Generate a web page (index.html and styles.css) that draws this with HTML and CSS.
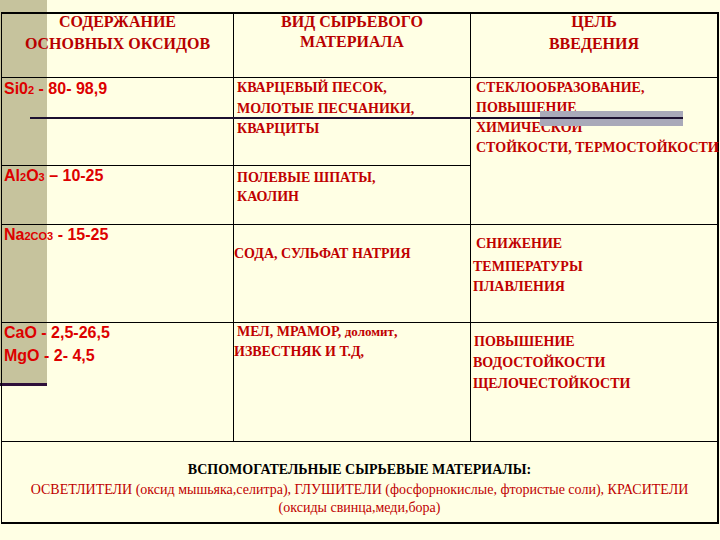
FILE: index.html
```html
<!DOCTYPE html>
<html lang="ru">
<head>
<meta charset="utf-8">
<title>Содержание основных оксидов</title>
<link rel="stylesheet" href="styles.css">
</head>
<body>
<div class="sheet">
  <div class="cell c1 head"><div class="hd h1"><div>СОДЕРЖАНИЕ</div><div>ОСНОВНЫХ ОКСИДОВ</div></div></div>
  <div class="cell c2 head"><div class="hd h2"><div>ВИД СЫРЬЕВОГО</div><div>МАТЕРИАЛА</div></div></div>
  <div class="cell c3 head"><div class="hd h3"><div>ЦЕЛЬ</div><div>ВВЕДЕНИЯ</div></div></div>

  <div class="cell c1 ox ox-si"><div>Si0<span class="sm">2</span> - 80- 98,9</div></div>
  <div class="cell c2 mat mat-si"><div>КВАРЦЕВЫЙ ПЕСОК,</div><div>МОЛОТЫЕ ПЕСЧАНИКИ,</div><div>КВАРЦИТЫ</div></div>
  <div class="cell c3 goal goal-si"><div>СТЕКЛООБРАЗОВАНИЕ,</div><div>ПОВЫШЕНИЕ</div><div>ХИМИЧЕСКОЙ</div><div>СТОЙКОСТИ, ТЕРМОСТОЙКОСТИ</div></div>

  <div class="cell c1 ox"><div>Al<span class="sm">2</span>O<span class="sm">3</span> – 10-25</div></div>
  <div class="cell c2 mat mat-al"><div>ПОЛЕВЫЕ ШПАТЫ,</div><div>КАОЛИН</div></div>

  <div class="cell c1 ox"><div>Na<span class="sm">2CO3</span> - 15-25</div></div>
  <div class="cell c2 mat mat-na"><div class="out">СОДА, СУЛЬФАТ НАТРИЯ</div></div>
  <div class="cell c3 goal goal-na"><div class="in">СНИЖЕНИЕ</div><div class="second">ТЕМПЕРАТУРЫ</div><div>ПЛАВЛЕНИЯ</div></div>

  <div class="cell c1 ox"><div>CaO - 2,5-26,5</div><div>MgO - 2- 4,5</div></div>
  <div class="cell c2 mat mat-ca"><div class="in">МЕЛ, МРАМОР, <span class="lc">доломит</span>,</div><div class="out">ИЗВЕСТНЯК И Т.Д,</div></div>
  <div class="cell c3 goal goal-ca"><div class="in">ПОВЫШЕНИЕ</div><div>ВОДОСТОЙКОСТИ</div><div>ЩЕЛОЧЕСТОЙКОСТИ</div></div>

  <div class="cell aux">
    <div class="aux-title">ВСПОМОГАТЕЛЬНЫЕ СЫРЬЕВЫЕ МАТЕРИАЛЫ:</div>
    <div class="aux-line">ОСВЕТЛИТЕЛИ (оксид мышьяка,селитра), ГЛУШИТЕЛИ (фосфорнокислые, фтористые соли), КРАСИТЕЛИ</div>
    <div class="aux-line last">(оксиды свинца,меди,бора)</div>
  </div>

  <div class="mark-bar"></div>
  <div class="mark-line"></div>
</div>
</body>
</html>
```

FILE: styles.css
```css
html, body {
  margin: 0;
  padding: 0;
}
body {
  width: 720px;
  height: 540px;
  overflow: hidden;
  background:
    linear-gradient(#2e0f3a, #2e0f3a) 0 383px / 47px 3px no-repeat,
    linear-gradient(#c6c39d, #c6c39d) 0 0 / 47px 383px no-repeat,
    #ffffe4;
  font-family: "Liberation Serif", "Times New Roman", serif;
}
.sheet {
  position: relative;
  margin: 12px 0 0 1px;
  width: 718px;
  box-sizing: border-box;
  border-top: 2px solid #000;
  border-left: 1px solid #000;
  border-right: 2px solid #000;
  border-bottom: 2px solid #000;
  display: grid;
  grid-template-columns: 232px 237px 246px;
  grid-template-rows: 64px 88px 59px 98px 119px 80px;
}
.cell {
  box-sizing: border-box;
  border-bottom: 1px solid #000;
  white-space: nowrap;
  min-width: 0;
}
.c1, .c2 { border-right: 1px solid #000; }
.c3 { grid-column: 3; }
.goal-si { grid-row: span 2; }

.head {
  color: #b80000;
  font-weight: bold;
  font-size: 16px;
  text-align: center;
}
.hd { margin-top: -3px; }
.h1 { line-height: 22.4px; }
.h2 { line-height: 20.3px; margin-top: -2.5px; }
.h3 { line-height: 22.7px; margin-top: -3.5px; }

.ox {
  color: #dd0000;
  font-family: "Liberation Sans", Arial, sans-serif;
  font-weight: bold;
  font-size: 16px;
  line-height: 19px;
  padding-left: 2px;
  display: flex;
  flex-direction: column;
  gap: 4px;
}
.ox-si { padding-top: 1px; }
.sm { font-size: 11px; }

.mat, .goal {
  color: #c00000;
  font-weight: bold;
  font-size: 14px;
  line-height: 20px;
}
.mat { padding-left: 3px; }
.goal { padding-left: 5px; }
.mat .out { margin-left: -3px; }
.lc { font-size: 13px; }

.mat-si { line-height: 20.5px; }
.mat-al { padding-top: 2px; line-height: 19.3px; }
.mat-na { padding-top: 19px; padding-left: 3px; }
.mat-ca { margin-top: -1px; line-height: 20.3px; }

.goal-si { padding-top: 0; }
.goal-na { padding-top: 8.6px; padding-left: 2px; }
.goal-na .in { margin-left: 3px; }
.goal-na .second { margin-top: 3px; }
.goal-ca { padding-top: 8px; padding-left: 2px; line-height: 21px; }
.goal-ca .in { margin-left: 1px; }

.aux {
  grid-column: 1 / 4;
  border-bottom: none;
  text-align: center;
  font-size: 14px;
  line-height: 18px;
  padding-top: 19px;
}
.aux-title {
  font-weight: bold;
  color: #000;
}
.aux-line {
  color: #c00000;
  margin-top: 2px;
}
.aux-line.last { margin-top: 0; }

.mark-bar {
  position: absolute;
  left: 538px;
  top: 97px;
  width: 143px;
  height: 15px;
  background: #a9a9b9;
}
.mark-line {
  position: absolute;
  left: 28px;
  top: 103px;
  width: 653px;
  height: 2px;
  background: #1c1030;
}
```
